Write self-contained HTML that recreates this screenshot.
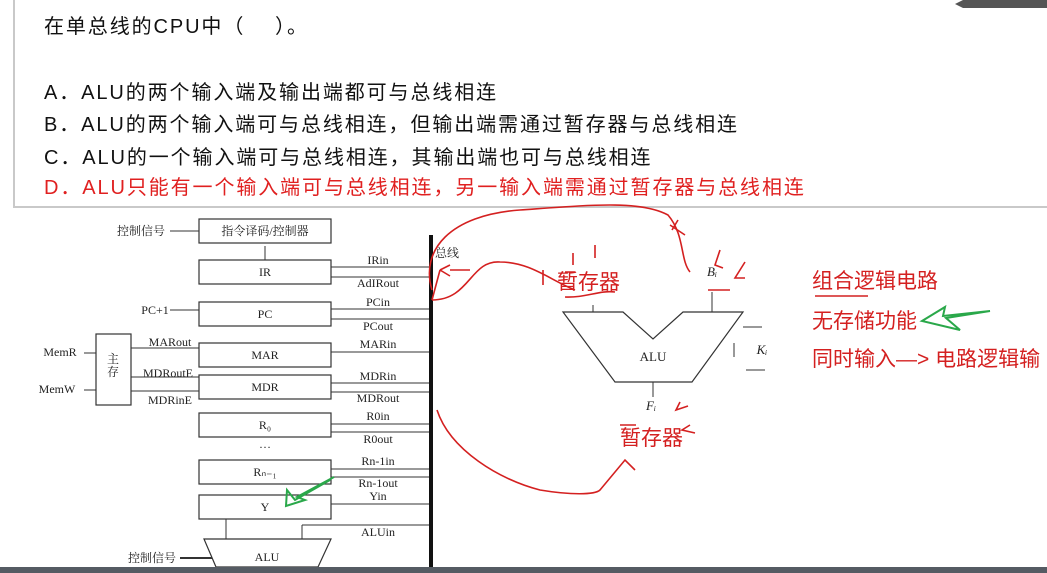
<!DOCTYPE html>
<html><head><meta charset="utf-8"><style>
html,body{margin:0;padding:0;background:#fff;width:1047px;height:573px;overflow:hidden}
svg{display:block}
.q{font-family:"Liberation Sans","Noto Sans CJK SC",sans-serif;font-size:20px;letter-spacing:1.9px;fill:#111}
.d{font-family:"Liberation Serif","Noto Serif CJK SC",serif;font-size:12px;fill:#222}
.r{font-family:"Liberation Sans","Noto Sans CJK SC",sans-serif;font-size:21px;fill:#d42020}
</style></head><body>
<svg width="1047" height="573" viewBox="0 0 1047 573" xmlns="http://www.w3.org/2000/svg">
<rect width="1047" height="573" fill="#fff"/>
<path d="M14 0V207H1047" fill="none" stroke="#c9c9c9" stroke-width="2"/>
<text class="q" x="44" y="33">在单总线的CPU中（&#160;&#160;&#160;&#160;）。</text>
<text class="q" x="44" y="99">A．ALU的两个输入端及输出端都可与总线相连</text>
<text class="q" x="44" y="131">B．ALU的两个输入端可与总线相连，但输出端需通过暂存器与总线相连</text>
<text class="q" x="44" y="164">C．ALU的一个输入端可与总线相连，其输出端也可与总线相连</text>
<text class="q" x="44" y="194" style="fill:#e02020">D．ALU只能有一个输入端可与总线相连，另一输入端需通过暂存器与总线相连</text>
<path d="M955 4l8-4h84v8h-84z" fill="#555"/>
<g stroke="#333" stroke-width="1.2" fill="#fff">
<rect x="199" y="219" width="132" height="24"/>
<rect x="199" y="260" width="132" height="24"/>
<rect x="199" y="302" width="132" height="24"/>
<rect x="199" y="343" width="132" height="24"/>
<rect x="199" y="375" width="132" height="24"/>
<rect x="199" y="413" width="132" height="24"/>
<rect x="199" y="460" width="132" height="24"/>
<rect x="199" y="495" width="132" height="24"/>
<rect x="96" y="334" width="35" height="71"/>
<path d="M204 539H331L318 567H216Z"/>
<path d="M563 312H623L653 339L683 312H743L692 382H615Z"/>
</g>
<g stroke="#333" stroke-width="1" fill="none">
<path d="M199 231H170M265 260V246M170 310H199M131 348H199M131 377H199M131 391H199M84 353H96M84 390H96"/>
<path d="M331 267H431M331 277H431M331 309H431M331 319H431M331 352H431M331 383H431M331 392H431M331 424H431M331 432H431M331 469H431M331 477H431M331 504H431M302 525H431M302 525V539M226 519V539"/>
<path d="M180 558H212" stroke-width="2"/>
<path d="M593 312V305M712 312V292M743 327H762M746 370H765M734 343V357"/>
<path d="M653 382V397"/>
</g>
<rect x="429" y="235" width="4" height="338" fill="#111"/>
<g class="d" text-anchor="middle">
<text x="265" y="235">指令译码/控制器</text>
<text x="265" y="276">IR</text><text x="265" y="318">PC</text><text x="265" y="359">MAR</text>
<text x="265" y="391">MDR</text><text x="265" y="429">R₀</text><text x="265" y="476">Rₙ₋₁</text>
<text x="265" y="511">Y</text><text x="265" y="448">…</text><text x="267" y="561">ALU</text>
<text x="113" y="363">主</text><text x="113" y="376">存</text>
<text x="141" y="235">控制信号</text><text x="152" y="562">控制信号</text>
<text x="155" y="314">PC+1</text><text x="60" y="356">MemR</text><text x="57" y="393">MemW</text>
<text x="170" y="346">MARout</text><text x="168" y="377">MDRoutE</text><text x="170" y="404">MDRinE</text>
<text x="378" y="264">IRin</text><text x="378" y="287">AdIRout</text><text x="378" y="306">PCin</text><text x="378" y="330">PCout</text>
<text x="378" y="348">MARin</text><text x="378" y="380">MDRin</text><text x="378" y="402">MDRout</text>
<text x="378" y="420">R0in</text><text x="378" y="443">R0out</text><text x="378" y="465">Rn-1in</text>
<text x="378" y="487">Rn-1out</text><text x="378" y="500">Yin</text><text x="378" y="536">ALUin</text>
<text x="447" y="257">总线</text>
<text x="653" y="361" font-size="13">ALU</text>
<text x="712" y="276" font-style="italic" font-size="13">Bᵢ</text>
<text x="651" y="410" font-style="italic" font-size="13">Fᵢ</text>
<text x="762" y="354" font-style="italic" font-size="13">Kᵢ</text>
</g>
<g class="r"><text x="557" y="289">暂存器</text><text x="620" y="445">暂存器</text>
<text x="812" y="288">组合逻辑电路</text><text x="812" y="328">无存储功能</text><text x="812" y="366">同时输入—&gt; 电路逻辑输</text></g>
<g fill="none" stroke="#d42020" stroke-width="1.6">
<path d="M432 290C420 250 450 215 520 210C590 205 640 200 668 215C685 235 680 260 690 272"/>
<path d="M432 300C470 300 470 260 500 262C530 262 550 280 575 290M432 300L440 270"/>
<path d="M450 270H470M440 270L450 265M440 270L450 276"/>
<path d="M670 225L685 235M672 230L678 220M565 297C585 298 600 290 615 292M708 290H730M620 425H636"/>
<path d="M573 253V265M595 245V258M720 250L715 265L723 268M745 262L735 278H745"/>
<path d="M680 402L676 410L688 406M690 425L682 430L695 433"/>
<path d="M437 410C450 450 500 480 540 490C570 495 595 495 600 490L625 460L635 470"/>
<path d="M815 296H868M565 272H575M543 285V270"/>
</g>
<g fill="none" stroke="#2aa84a" stroke-width="2">
<path d="M990 311L946 318L960 330L922 321L945 307L943 316Z"/>
<path d="M330 480L295 500L287 490L286 506L305 500L297 497L334 477"/>
</g>
<rect x="0" y="567" width="1047" height="6" fill="#555b63"/>
</svg>
</body></html>
